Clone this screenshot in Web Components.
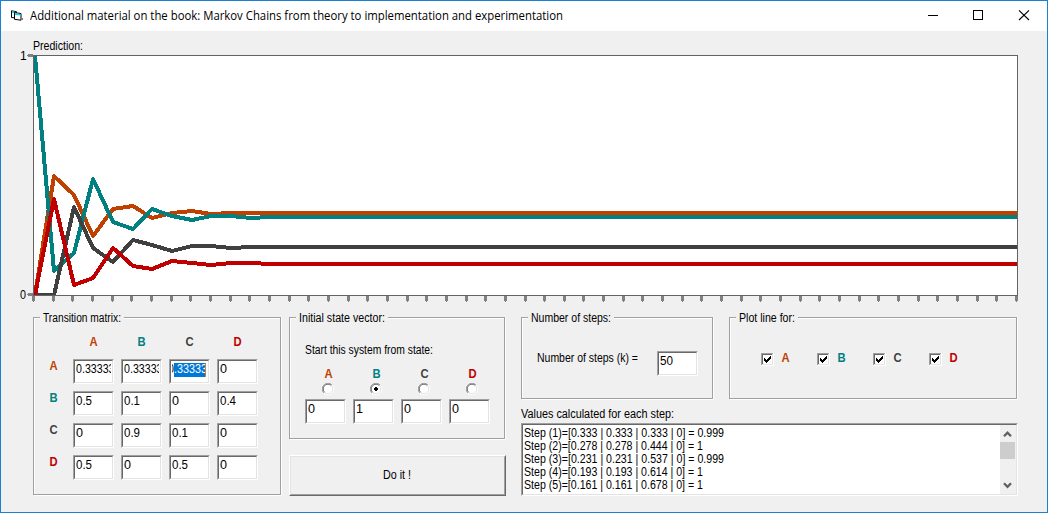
<!DOCTYPE html>
<html lang="en">
<head>
<meta charset="utf-8">
<title>Additional material on the book: Markov Chains from theory to implementation and experimentation</title>
<style>
html,body{margin:0;height:100%;overflow:hidden;background:#f0f0f0}
body{font:12px/13px "Liberation Sans",Arial,sans-serif;color:#000}
</style>
</head>
<body>
<markov-app></markov-app>
<script>
const COLORS = {A:'#c04000', B:'#008080', C:'#404040', D:'#c00000'};
const STATES = ['A','B','C','D'];
const define = (name, render, after) => customElements.define(name, class extends HTMLElement {
  connectedCallback() {
    if (this.shadowRoot) return;
    this.attachShadow({mode:'open'}).innerHTML = render(this);
    if (after) after(this, this.shadowRoot);
  }
});

/* One line of text, condensed to the width given by "w". */
define('ui-text', el => `<style>
  :host{display:block;height:13px;width:${el.getAttribute('w')}px;white-space:pre}
  span{display:inline-block;transform-origin:0 0}
</style><span><slot></slot></span>`, (el, root) => {
  const s = root.querySelector('span');
  s.style.transform = `scaleX(${el.getAttribute('w') / s.getBoundingClientRect().width})`;
});

define('state-letter', el => `<style>
  :host{display:block;font-weight:bold;font-size:12.5px;height:13px;text-align:center;color:${COLORS[el.textContent.trim()]}}
  span{display:inline-block;transform:scaleX(.9)}
</style><span><slot></slot></span>`);

define('title-bar', () => `<style>
  :host{display:flex;height:30px;background:#fff;padding-left:10px;align-items:center;font-family:"Open Sans","Noto Sans",sans-serif}
  ui-text{margin:0 auto 0 5px;position:relative;top:-1px}
  svg{display:block;flex:none}
</style>
<svg width="14" height="30" viewBox="11 1 14 30">
  <path d="M11.500 10.800l5 .9v6.300l-5-.5z" fill="#fff" stroke="#000"/>
  <path d="M12 12l4 .7" stroke="#00d8e0" stroke-width="1.500"/>
  <path d="M14.500 12.600l6.500.9v6.700l-6.500-.9z" fill="#fff" stroke="#000"/>
  <path d="M15 14l5.500.8" stroke="#00d8e0" stroke-width="1.500"/>
  <path d="M22 18h1v2h-1z" fill="#777"/>
</svg>
<ui-text w="533"><slot></slot></ui-text>
<svg width="138" height="30" viewBox="909 1 138 30" fill="none" stroke="#000">
  <path d="M928 15.5h10M973.500 10.500h9v9h-9z" shape-rendering="crispEdges"/>
  <path d="M1019 10.300l10 9.700M1029 10.300l-10 9.700" stroke-width="1.100"/>
</svg>`);

define('prediction-chart', () => {
  const P = [[.33333,.33333,.33333,0],[.5,.1,0,.4],[0,.9,.1,0],[.5,0,.5,0]];
  const N = 50, step = 19.66;
  let v = [0,1,0,0];
  const lines = STATES.map(() => []);
  for (let k = 0; k <= N; k++) {
    const x = k ? Math.round(34.5 + k*step) : 35;
    v.forEach((p,i) => lines[i].push(`${Math.min(x,1018)},${Math.round(295 - 239*p)}`));
    v = STATES.map((_,j) => v.reduce((s,p,i) => s + p*P[i][j], 0));
    const sum = v.reduce((a,b) => a+b);
    v = v.map(p => p/sum);
  }
  let ticks = '';
  for (let k = 0; k <= N; k++) {
    const x = Math.round(32 + k*step);
    ticks += `M${x} 296h3v5h-1v1h-1v-1h-1z`;
  }
  return `<style>:host{display:block}svg{display:block}text{font:12px "Liberation Sans",Arial,sans-serif}</style>
<svg width="1046" height="252" viewBox="1 52 1046 252" overflow="visible">
  <g shape-rendering="crispEdges">
    <path d="M33.500 55.500h984v240h-984z" fill="#fff" stroke="#646464"/>
    <clipPath id="c"><path d="M34 56h983v239h-983z"/></clipPath>
    <g clip-path="url(#c)" fill="none" stroke-width="4" stroke-linejoin="round">
      ${lines.map((l,i) => `<polyline points="${l.join(' ')}" stroke="${COLORS[STATES[i]]}"/>`).join('')}
    </g>
    <path d="${ticks}M28 54h5v3h-5v-1h-1v-1h1zM28 293h5v3h-5v-1h-1v-1h1z" fill="#808080"/>
  </g>
  <text x="20" y="60">1</text><text x="20" y="299" textLength="6" lengthAdjust="spacingAndGlyphs">0</text>
</svg>`;
});

define('group-box', el => `<style>
  :host{display:block;box-sizing:border-box;flex:none;position:relative;border:1px solid #a0a0a0;box-shadow:1px 1px 0 #fff,inset 1px 1px 0 #fff}
  .legend{position:absolute;left:6px;top:-6px;padding:0 3px 0 2.5px;background:#f0f0f0}
</style><div class="legend"><ui-text w="${el.getAttribute('w')}">${el.getAttribute('label')}</ui-text></div><slot></slot>`);

define('text-box', el => `<style>
  :host{display:block;box-sizing:border-box;width:41px;height:25px;border:1px solid;border-color:#a0a0a0 #fff #fff #a0a0a0}
  .in{box-sizing:border-box;height:23px;background:#fff;border:1px solid;border-color:#696969 #e3e3e3 #e3e3e3 #696969;padding:2px 1px 0}
  .clip{display:flex;overflow:hidden;height:14px}
  ui-text{flex:none}
  .zero{margin-left:-4px;flex:none}
  .sel{background:#0078d7;color:#fff;flex:none;width:32px;border-right:1px solid #e07a28;box-sizing:border-box;overflow:hidden}
</style><div class="in"><div class="clip">${el.hasAttribute('selected')
  ? '<ui-text class="zero" w="6">0</ui-text><div class="sel"><ui-text w="33">.33333</ui-text></div>'
  : `<ui-text w="${el.textContent.length*6 + 1 - (el.textContent.includes('.') ? 3 : 0) - (el.textContent.length > 4 ? 1.5 : 0)}"><slot></slot></ui-text>`}</div></div>`);

define('transition-matrix', () => {
  const rows = [['0.33333','0.33333','*','0'],['0.5','0.1','0','0.4'],['0','0.9','0.1','0'],['0.5','0','0.5','0']];
  return `<style>
  :host{display:grid;grid-template-columns:39px repeat(4,48px);grid-template-rows:23px repeat(4,32px);padding-top:18px}
  .head{width:41px}.row{padding-top:1px}
</style><span></span>${STATES.map(s => `<state-letter class="head">${s}</state-letter>`).join('')}
${rows.map((r,i) => `<state-letter class="row">${STATES[i]}</state-letter>` +
  r.map(c => c === '*' ? '<text-box selected></text-box>' : `<text-box>${c}</text-box>`).join('')).join('')}`;
});

define('state-radio', el => `<style>:host{display:block;width:12px;height:12px}svg{display:block}</style>
<svg width="12" height="12" viewBox="0 0 12 12"><circle cx="6" cy="6" r="5" fill="#fff"/>
<g fill="none"><path d="M1.900 10.100A5.700 5.700 0 0 1 10.100 1.900" stroke="#a0a0a0"/><path d="M2.600 9.400A4.700 4.700 0 0 1 9.400 2.600" stroke="#696969"/>
<path d="M10.100 1.900A5.700 5.700 0 0 1 1.900 10.100" stroke="#fff"/><path d="M9.400 2.600A4.700 4.700 0 0 1 2.600 9.400" stroke="#e3e3e3"/></g>
${el.hasAttribute('checked') ? '<path d="M5 4h2v1h1v2h-1v1h-2v-1h-1v-2h1z" fill="#000"/>' : ''}</svg>`);

define('initial-vector', () => `<style>
  :host{display:block;padding:26px 0 0 15px}
  .cols{display:flex;gap:7px;margin-top:11px}
  .cols>div{width:41px}
  state-letter{padding-left:6px}
  state-radio{margin:2px 0 4px 17px}
</style><ui-text w="128">Start this system from state:</ui-text><div class="cols">
${STATES.map(s => `<div><state-letter>${s}</state-letter><state-radio ${s==='B'?'checked':''}></state-radio><text-box>${s==='B'?1:0}</text-box></div>`).join('')}</div>`);

define('push-button', () => `<style>
  :host{display:flex;box-sizing:border-box;width:217px;height:41px;border:1px solid;border-color:#fff #696969 #696969 #fff}
  div{flex:1;display:flex;justify-content:center;align-items:center;border:1px solid;border-color:#e3e3e3 #a0a0a0 #a0a0a0 #e3e3e3}
  ui-text{margin:-1px 1px 0 0}
</style><div><ui-text w="28"><slot></slot></ui-text></div>`);

define('line-toggle', el => `<style>
  :host{display:flex;width:56px}
  svg{display:block;margin-top:1px}
  state-letter{margin-left:6.5px;min-width:8px}
</style><svg width="13" height="13" shape-rendering="crispEdges"><path d="M0 0h13v13h-13z" fill="#fff"/>
<path d="M.5 12V.5H12" fill="none" stroke="#a0a0a0"/><path d="M1.500 11V1.500H11" fill="none" stroke="#696969"/><path d="M1 11.500h10.500V1" fill="none" stroke="#e3e3e3"/>
<path d="M3 5h1v1h1v1h1v-1h1v-1h1v-1h1v-1h1v3h-1v1h-1v1h-1v1h-1v1h-1v-1h-1v-1h-1z" fill="#000"/></svg>
<state-letter>${el.textContent}</state-letter>`);

define('step-list', () => `<style>
  :host{display:block;box-sizing:border-box;width:497px;height:73px;border:1px solid;border-color:#a0a0a0 #fff #fff #a0a0a0}
  .in{box-sizing:border-box;height:71px;background:#fff;border:1px solid;border-color:#696969 #e3e3e3 #e3e3e3 #696969;display:flex;justify-content:space-between;overflow:hidden}
  .rows{padding:2px 0 0 1px}
  svg{display:block;background:#f0f0f0}
</style><div class="in"><div class="rows">
<ui-text w="200">Step (1)=[0.333 | 0.333 | 0.333 | 0] = 0.999</ui-text>
<ui-text w="179">Step (2)=[0.278 | 0.278 | 0.444 | 0] = 1</ui-text>
<ui-text w="200">Step (3)=[0.231 | 0.231 | 0.537 | 0] = 0.999</ui-text>
<ui-text w="179">Step (4)=[0.193 | 0.193 | 0.614 | 0] = 1</ui-text>
<ui-text w="179">Step (5)=[0.161 | 0.161 | 0.678 | 0] = 1</ui-text>
</div><svg width="16" height="69" viewBox="1000 425 16 69"><path d="M1000 442h15v17h-15z" fill="#cdcdcd"/>
<path d="M1004 436.200l3.500-3.500 3.500 3.500M1004 483.300l3.500 3.500 3.500-3.500" fill="none" stroke="#606060" stroke-width="2.300"/></svg></div>`);

define('markov-app', () => `<style>
  :host{display:block;box-sizing:border-box;width:1048px;height:513px;border:1px solid #1a80d4;background:#f0f0f0}
  .pred{margin:9px 0 -1px 32px}
  .panels{display:flex;padding:13px 0 0 32px}
  .mid{width:216px;margin:0 16px 0 8px}
  push-button{margin-top:16px}
  .top{display:flex;gap:16px}
  .steps{display:flex;padding:33px 0 0 15px}
  .steps ui-text{margin:1px 19px 0 0}
  .toggles{display:flex;padding:34px 0 0 31px}
  .cap{margin:9px 0 2px}
</style>
<title-bar>Additional material on the book: Markov Chains from theory to implementation and experimentation</title-bar>
<ui-text class="pred" w="50">Prediction:</ui-text>
<prediction-chart></prediction-chart>
<div class="panels">
  <group-box label="Transition matrix:" w="78" style="width:248px;height:178px"><transition-matrix></transition-matrix></group-box>
  <div class="mid">
    <group-box label="Initial state vector:" w="86" style="height:122px"><initial-vector></initial-vector></group-box>
    <push-button>Do it !</push-button>
  </div>
  <div>
    <div class="top">
      <group-box label="Number of steps:" w="80" style="width:192px;height:82px"><div class="steps"><ui-text w="101">Number of steps (k) =</ui-text><text-box>50</text-box></div></group-box>
      <group-box label="Plot line for:" w="56" style="width:288px;height:82px"><div class="toggles">${STATES.map(s => `<line-toggle>${s}</line-toggle>`).join('')}</div></group-box>
    </div>
    <ui-text class="cap" w="153">Values calculated for each step:</ui-text>
    <step-list></step-list>
  </div>
</div>`);
</script>
</body>
</html>
